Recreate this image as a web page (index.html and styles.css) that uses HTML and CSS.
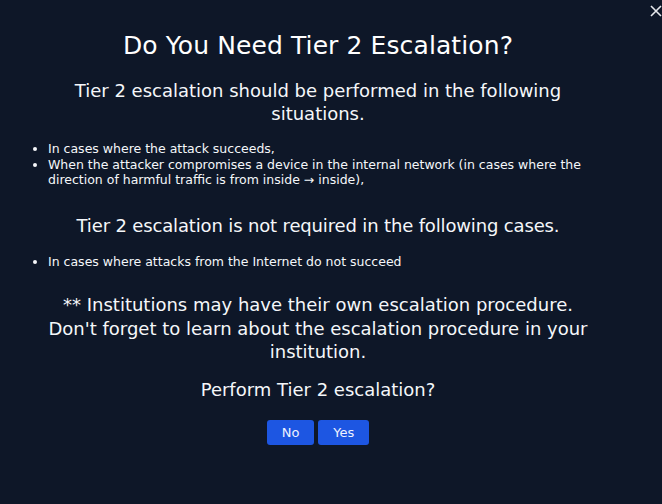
FILE: index.html
```html
<!DOCTYPE html>
<html>
<head>
<meta charset="utf-8">
<link rel="stylesheet" href="styles.css">
</head>
<body>
<div class="modal">
  <button class="close" aria-label="Close">
    <svg width="12" height="12" viewBox="0 0 12 12"><path d="M1 1L11 11M11 1L1 11" stroke="#e5e7eb" stroke-width="1.6" fill="none"/></svg>
  </button>
  <h1 class="title">Do You Need Tier 2 Escalation?</h1>
  <p class="lead lead-1">Tier 2 escalation should be performed in the following situations.</p>
  <ul class="list list-1">
    <li>In cases where the attack succeeds,</li>
    <li>When the attacker compromises a device in the internal network (in cases where the direction of harmful traffic is from inside → inside),</li>
  </ul>
  <p class="lead lead-2">Tier 2 escalation is not required in the following cases.</p>
  <ul class="list list-2">
    <li>In cases where attacks from the Internet do not succeed</li>
  </ul>
  <p class="lead notice">** Institutions may have their own escalation procedure. Don't forget to learn about the escalation procedure in your institution.</p>
  <p class="lead question">Perform Tier 2 escalation?</p>
  <div class="actions">
    <button class="btn">No</button>
    <button class="btn">Yes</button>
  </div>
</div>
</body>
</html>
```
FILE: styles.css
```css
html, body {
  margin: 0;
  padding: 0;
  background: #0e1728;
}
body {
  width: 662px;
  height: 504px;
  overflow: hidden;
  font-family: "DejaVu Sans", "Noto Sans", sans-serif;
  color: #f5f7fa;
}
.modal {
  position: relative;
  display: flex;
  flex-direction: column;
  align-items: center;
  padding: 31px 58px 0 32px;
  box-sizing: border-box;
  width: 662px;
  height: 504px;
}
.close {
  position: absolute;
  top: 4px;
  right: -1px;
  width: 14px;
  height: 14px;
  padding: 0;
  border: 0;
  background: transparent;
  display: flex;
  align-items: center;
  justify-content: center;
}
.title {
  margin: 0;
  font-size: 25px;
  line-height: 30px;
  font-weight: 400;
  color: #ffffff;
  text-align: center;
  letter-spacing: 0.1px;
}
.lead {
  margin: 0;
  font-size: 18px;
  line-height: 23px;
  text-align: center;
}
.lead-1 {
  margin-top: 18px;
}
.list {
  align-self: stretch;
  margin: 0;
  padding-left: 16px;
  font-size: 12.5px;
  line-height: 15.5px;
}
.list-1 {
  margin-top: 16px;
}
.lead-2 {
  margin-top: 26px;
  letter-spacing: -0.15px;
}
.list-2 {
  margin-top: 17px;
}
.notice {
  margin-top: 24px;
  max-width: 546px;
  line-height: 23.5px;
}
.question {
  margin-top: 14px;
}
.actions {
  display: flex;
  gap: 4px;
  margin-top: 19px;
}
.btn {
  height: 25px;
  padding: 0 15px;
  border: 0;
  border-radius: 3px;
  background: #1d56e2;
  color: #eef2ff;
  font-family: inherit;
  font-size: 13px;
}
```
